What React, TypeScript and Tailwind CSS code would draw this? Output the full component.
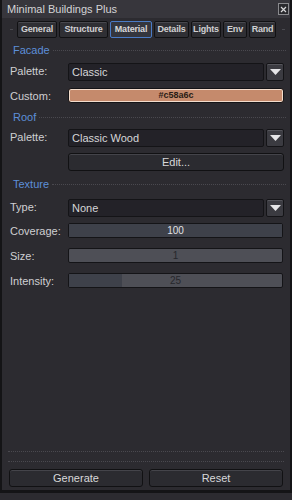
import React from "react";

const font = { fontFamily: '"Liberation Sans", Arial, sans-serif' };

const tabs = [
  { name: "General", w: "w-[40px]" },
  { name: "Structure", w: "w-[49px]" },
  { name: "Material", w: "w-[42px]" },
  { name: "Details", w: "w-[35px]" },
  { name: "Lights", w: "w-[30px]" },
  { name: "Env", w: "w-[24px]" },
  { name: "Rand", w: "w-[27px]" },
];

function Section({ title }: { title: string }) {
  return (
    <div className="flex h-[14px] items-center pl-[11px] pr-[4px]">
      <span className="text-[11px] leading-none text-[#5d8fd9]">{title}</span>
      <div className="ml-[3px] h-0 flex-1 border-t border-dotted border-[#4a494f]" />
    </div>
  );
}

function Label({ text }: { text: string }) {
  return (
    <div className="w-[58px] shrink-0 self-start pt-[3px] text-[11px] leading-none text-[#cfcfd2]">
      {text}
    </div>
  );
}

function Dropdown({ label, value }: { label: string; value: string }) {
  return (
    <div className="flex h-[18px] pl-[8px] pr-[6px]">
      <Label text={label} />
      <div className="flex h-[18px] flex-1 items-center rounded-[2px] border border-[#141417] bg-[#232228] px-[3px] text-[11px] leading-none text-[#d6d6d8]">
        {value}
      </div>
      <div className="ml-[2px] flex h-[18px] w-[18px] items-center justify-center rounded-[2px] border border-[#141417] bg-[#3b3b41] shadow-[inset_0_1px_0_#55555b]">
        <svg width="11" height="7" viewBox="0 0 11 7">
          <path d="M0 0 H11 L5.5 6 Z" fill="#e6e6e8" />
        </svg>
      </div>
    </div>
  );
}

function Slider({ label, value, pct, textClass }: { label: string; value: string; pct: number; textClass: string }) {
  return (
    <div className="flex h-[15px] pl-[8px] pr-[7px]">
      <Label text={label} />
      <div className="relative flex h-[15px] flex-1 items-center justify-center overflow-hidden rounded-[2px] border border-[#141417] bg-[#4e4f56]">
        <div className="absolute inset-y-0 left-0 bg-[#3e414a]" style={{ width: `${pct}%` }} />
        <span className={`relative text-[10px] leading-none ${textClass}`}>{value}</span>
      </div>
    </div>
  );
}

function Button({ text, className }: { text: string; className: string }) {
  return (
    <div
      className={`flex h-[18px] items-center justify-center rounded-[3px] border border-[#111113] bg-[#2b2b30] text-[11px] leading-none text-[#d8d8da] shadow-[inset_0_1px_0_#44444a] ${className}`}
    >
      {text}
    </div>
  );
}

export default function App() {
  return (
    <div className="h-[500px] w-[292px] bg-[#2c2b30]" style={font}>
      <div className="flex h-[493px] flex-col border-x-[2px] border-b-[3px] border-[#141416] bg-[#2c2b30]">
        {/* title bar */}
        <div className="flex h-[18px] shrink-0 items-center justify-between bg-[#37363c] pl-[5px] pr-[1px]">
          <span className="text-[11px] leading-none text-[#d4d4d6]">Minimal Buildings Plus</span>
          <div className="flex h-[12px] w-[11px] items-center justify-center border border-[#8a8a8e] bg-[#2a2a2e]">
            <svg width="7" height="7" viewBox="0 0 7 7">
              <path d="M1 1 L6 6 M6 1 L1 6" stroke="#d8d8da" strokeWidth="1.2" />
            </svg>
          </div>
        </div>

        {/* tabs */}
        <div className="mt-[3px] flex h-[17px] shrink-0 items-center">
          <span className="ml-[8px] mr-[4px] h-px w-[3px] shrink-0 bg-[#4a4a50]" />
          <div className="flex gap-[2px]">
            {tabs.map(t => (
              <div
                key={t.name}
                className={
                  t.name === "Material"
                    ? `flex h-[17px] items-center justify-center rounded-[2px] border border-[#4a7bc6] bg-[#34363e] text-[9px] font-bold leading-none tracking-[-0.2px] text-[#d8d8da] ${t.w}`
                    : `flex h-[17px] items-center justify-center rounded-[2px] border border-[#111113] bg-[#2f2f34] text-[9px] font-bold leading-none tracking-[-0.2px] text-[#cfcfd2] shadow-[inset_0_1px_0_#48484e] ${t.w}`
                }
              >
                {t.name}
              </div>
            ))}
          </div>
          <span className="ml-[6px] h-px w-[3px] shrink-0 bg-[#4a4a50]" />
        </div>

        <div className="mt-[5px]">
          <Section title="Facade" />
        </div>
        <div className="mt-[6px]">
          <Dropdown label="Palette:" value="Classic" />
        </div>
        <div className="mt-[7px] flex h-[15px] pl-[8px] pr-[6px]">
          <Label text="Custom:" />
          <div className="flex h-[15px] flex-1 items-center justify-center rounded-[3px] border border-[#141417] bg-[#c58a6c] text-[9px] font-bold leading-none text-[#2a1c16] shadow-[inset_0_0_0_1px_#f3ddcd]">
            #c58a6c
          </div>
        </div>

        <div className="mt-[7px]">
          <Section title="Roof" />
        </div>
        <div className="mt-[5px]">
          <Dropdown label="Palette:" value="Classic Wood" />
        </div>
        <div className="mt-[6px] pl-[66px] pr-[6px]">
          <Button text="Edit..." className="w-full" />
        </div>

        <div className="mt-[6px]">
          <Section title="Texture" />
        </div>
        <div className="mt-[8px]">
          <Dropdown label="Type:" value="None" />
        </div>
        <div className="mt-[6px] flex flex-col gap-[10px]">
          <Slider label="Coverage:" value="100" pct={100} textClass="text-[#e2e2e4]" />
          <Slider label="Size:" value="1" pct={0} textClass="text-[#26272c]" />
          <Slider label="Intensity:" value="25" pct={25} textClass="text-[#26272c]" />
        </div>

        <div className="flex-1" />

        <div className="mx-[6px] border-t border-dotted border-[#4a494f]" />
        <div className="mx-[6px] mt-[9px] border-t border-dotted border-[#4a494f]" />
        <div className="mb-[3px] mt-[7px] flex gap-[6px] px-[7px]">
          <Button text="Generate" className="flex-1" />
          <Button text="Reset" className="flex-1" />
        </div>
      </div>
    </div>
  );
}
